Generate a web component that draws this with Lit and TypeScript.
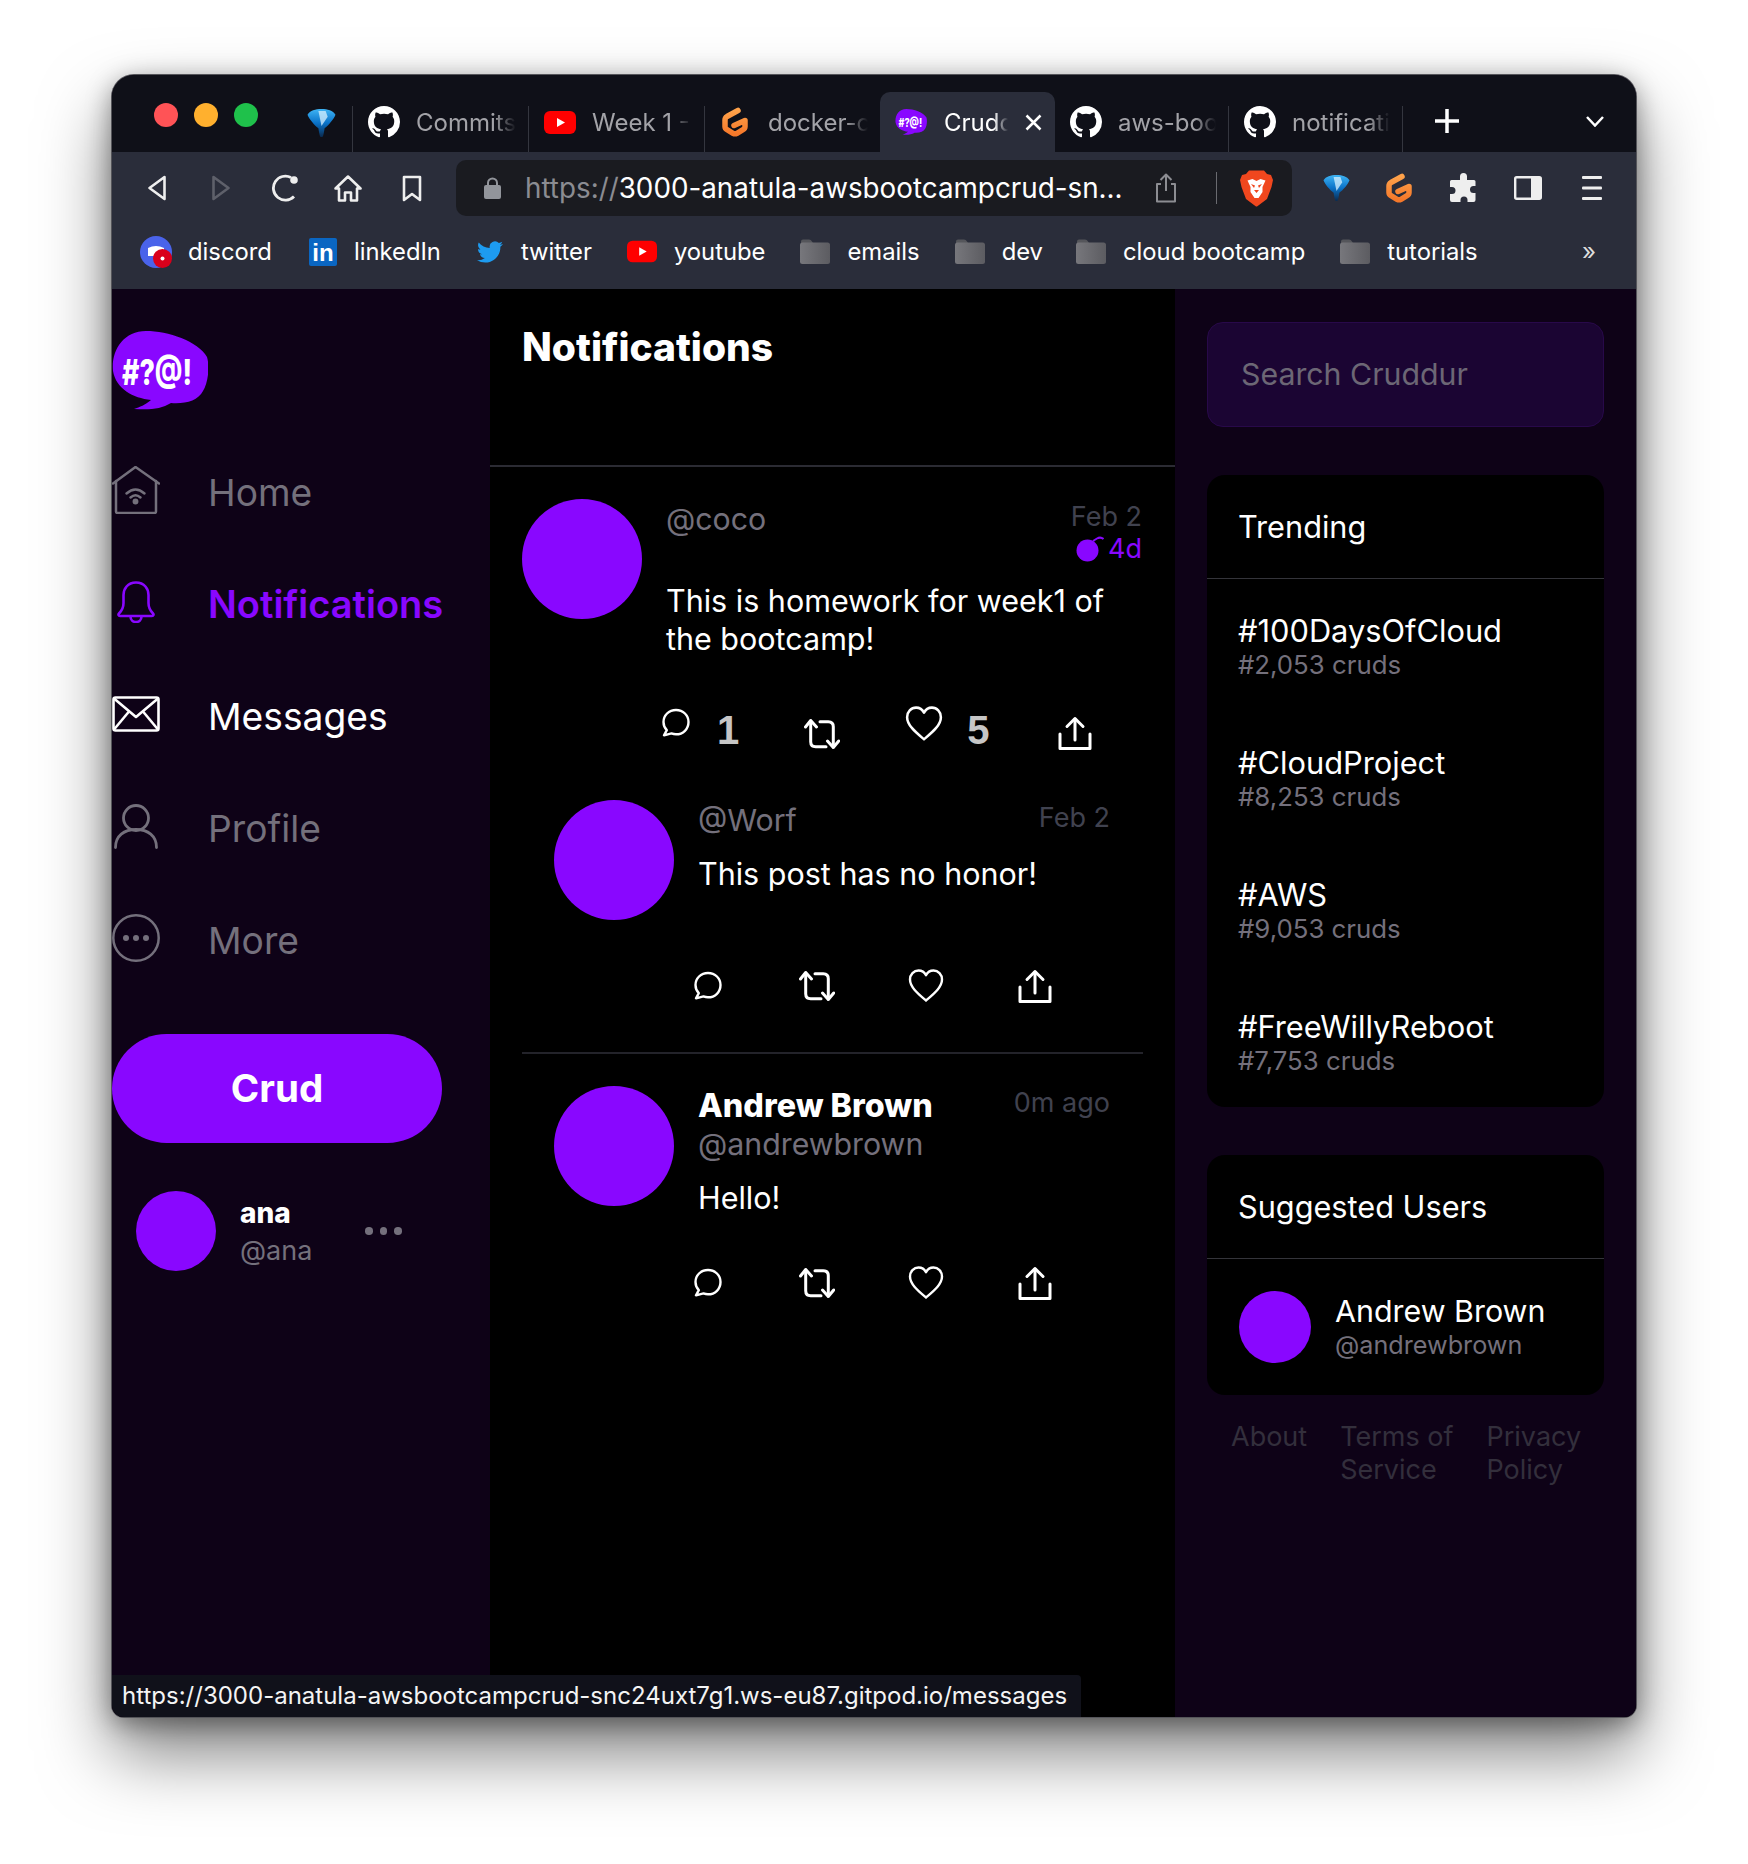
import { LitElement, css, html, svg } from "lit";
import { customElement } from "lit/decorators.js";

const GITHUB =
  "M8 0C3.58 0 0 3.58 0 8c0 3.54 2.29 6.53 5.47 7.59.4.07.55-.17.55-.38 0-.19-.01-.82-.01-1.49-2.01.37-2.53-.49-2.69-.94-.09-.23-.48-.94-.82-1.13-.28-.15-.68-.52-.01-.53.63-.01 1.08.58 1.23.82.72 1.21 1.87.87 2.33.66.07-.52.28-.87.51-1.07-1.78-.2-3.64-.89-3.64-3.95 0-.87.31-1.59.82-2.15-.08-.2-.36-1.02.08-2.12 0 0 .67-.21 2.2.82.64-.18 1.32-.27 2-.27.68 0 1.36.09 2 .27 1.53-1.04 2.2-.82 2.2-.82.44 1.1.16 1.92.08 2.12.51.56.82 1.27.82 2.15 0 3.07-1.87 3.75-3.65 3.95.29.25.54.73.54 1.48 0 1.07-.01 1.93-.01 2.2 0 .21.15.46.55.38A8.013 8.013 0 0016 8c0-4.42-3.58-8-8-8z";
const TWITTER =
  "M23.953 4.57a10 10 0 01-2.825.775 4.958 4.958 0 002.163-2.723c-.951.555-2.005.959-3.127 1.184a4.92 4.92 0 00-8.384 4.482C7.69 8.095 4.067 6.13 1.64 3.162a4.822 4.822 0 00-.666 2.475c0 1.71.87 3.213 2.188 4.096a4.904 4.904 0 01-2.228-.616v.06a4.923 4.923 0 003.946 4.827 4.996 4.996 0 01-2.212.085 4.936 4.936 0 004.604 3.417 9.867 9.867 0 01-6.102 2.105c-.39 0-.779-.023-1.17-.067a13.995 13.995 0 007.557 2.209c9.053 0 13.998-7.496 13.998-13.985 0-.21 0-.42-.015-.63A9.935 9.935 0 0024 4.59z";
const BUBBLE =
  "M34 0C56 0 86 10 95 26C98 36 96 52 91 60C86 70 73 73 59 72C49 78 39 79 22 78C28 76 33 74 39 69C21 67 4 58 1 40C-1 20 11 0 34 0Z";

const github = () => html`<svg width="32" height="32" viewBox="0 0 16 16"><path fill="#fff" d=${GITHUB}></path></svg>`;
const youtube = (w = 32, h = 23) => html`<svg width=${w} height=${h} viewBox="0 0 32 23">
  <rect width="32" height="23" rx="6" fill="#f00"></rect><path d="M13 7l8 4.500-8 4.500z" fill="#fff"></path>
</svg>`;
const gitpod = () => html`<svg class="gp" width="30" height="32" viewBox="0 0 30 32">
  <defs><linearGradient id="gpg" x1="0" y1="0" x2="0" y2="1">
    <stop offset="0" stop-color="#ffa24a"></stop><stop offset="1" stop-color="#f5782a"></stop>
  </linearGradient></defs>
  <path d="M18 4.500L7 10.500Q5 11.700 5 14V20.500Q5 22.500 7 23.700L13 27.300Q15 28.400 17 27.300L23 23.700Q25 22.500 25 20.500V14.500L14 19.500"
    fill="none" stroke="url(#gpg)" stroke-width="5.500" stroke-linecap="round" stroke-linejoin="round"></path>
</svg>`;
const gem = (w = 29, h = 30) => html`<svg width=${w} height=${h} viewBox="0 0 28 28">
  <defs><linearGradient id="gm" x1="0" y1="0" x2="0" y2="1">
    <stop offset="0" stop-color="#3eb4f4"></stop><stop offset=".5" stop-color="#0a72c8"></stop><stop offset="1" stop-color="#0a2a4e"></stop>
  </linearGradient></defs>
  <path d="M14 .5C20 .5 25 2 27.500 6C26 10 21 16 17 19C16.500 22 16 26 15 27.500H13C12 26 11.500 22 11 19C7 16 2 10 .5 6C3 2 8 .5 14 .5Z" fill="url(#gm)"></path>
  <path d="M11 2.500H18L20 8L14 17Z" fill="#d8f2ff" opacity=".75"></path>
</svg>`;
const folder = () => html`<svg width="30" height="25" viewBox="0 0 30 25">
  <defs><linearGradient id="fd" x1="0" y1="0" x2="1" y2="0">
    <stop offset="0" stop-color="#77777c"></stop><stop offset="1" stop-color="#5c5c61"></stop>
  </linearGradient></defs>
  <path d="M1 2.500Q1 .5 3 .5H9Q11 .5 12 2.500L13 4H1Z" fill="#55565b"></path><rect y="3.500" width="30" height="21.500" rx="2.500" fill="url(#fd)"></rect>
</svg>`;

const commentIcon = svg`<path d="M15 2C7.800 2 2.500 7.300 2.500 14C2.500 17.300 3.800 20.100 5.800 22.200L3 27.300L10.500 25.400C12 26 13.400 26.300 15 26.300C22.200 26.300 27.500 21 27.500 14C27.500 7.300 22.200 2 15 2Z" fill="none" stroke="currentColor" stroke-width="2.400" stroke-linejoin="round"></path>`;
const retweetIcon = svg`<g fill="none" stroke="currentColor" stroke-width="3" stroke-linecap="round" stroke-linejoin="round"><path d="M1.500 11L6.700 4.500L12.500 11"></path><path d="M6.700 5V25.700Q6.700 30.700 11.700 30.700H22"></path><path d="M23.500 25L29.300 31.500L34.700 25"></path><path d="M29.300 31V10.700Q29.300 5.700 24.300 5.700H16"></path></g>`;
const heartIcon = svg`<path d="M18 32.500C11 26.500 2 19.500 2 11.500C2 6.500 5.800 2.500 10.500 2.500C13.800 2.500 16.500 4.300 18 7.300C19.500 4.300 22.200 2.500 25.500 2.500C30.200 2.500 34 6.500 34 11.500C34 19.500 25 26.500 18 32.500Z" fill="none" stroke="currentColor" stroke-width="2.400" stroke-linejoin="round"></path>`;
const shareIcon = svg`<g fill="none" stroke="currentColor" stroke-width="3" stroke-linecap="round" stroke-linejoin="round"><path d="M17 24V3"></path><path d="M9 10.500L17 2.500L25 10.500"></path><path d="M2 18V32.500H32V18"></path></g>`;

const icon = (vb: string, w: number, h: number, body: unknown) =>
  html`<svg width=${w} height=${h} viewBox=${vb}>${body}</svg>`;

const NAV = [
  { label: "Home", cls: "", svg: html`<svg width="48" height="48" viewBox="0 0 48 48" fill="none" stroke="currentColor" stroke-width="2.500" stroke-linecap="round" stroke-linejoin="round"><path d="M1 17.500L23.500 1L47 17.500"></path><path d="M4 15V45.500Q4 47 5.500 47H42.500Q44 47 44 45.500V15"></path><path d="M14.500 27.500Q23.500 19.500 32.500 27.500"></path><path d="M18.500 31.500Q23.500 27 28.500 31.500"></path><circle cx="23.500" cy="35.500" r="1.700" fill="currentColor"></circle></svg>` },
  { label: "Notifications", cls: "active", svg: html`<svg width="38" height="42" viewBox="0 0 38 42" fill="none" stroke="currentColor" stroke-width="2.600" stroke-linecap="round" stroke-linejoin="round"><path d="M19 1.500C10.500 1.500 6.500 8 6.500 14V22C6.500 27 4.500 30 2 32.500C1 33.500 1.500 35 3 35H35C36.500 35 37 33.500 36 32.500C33.500 30 31.500 27 31.500 22V14C31.500 8 27.500 1.500 19 1.500Z"></path><path d="M13.500 35.500C13.500 39 16 41 19 41C22 41 24.500 39 24.500 35.500"></path></svg>` },
  { label: "Messages", cls: "on", svg: html`<svg width="48" height="36" viewBox="0 0 48 36" fill="none" stroke="currentColor" stroke-width="2.600" stroke-linejoin="round"><rect x="1.500" y="1.500" width="45" height="33" rx="2"></rect><path d="M2 2.500L24 21L46 2.500"></path><path d="M2 33.500L17 15.500"></path><path d="M46 33.500L31 15.500"></path></svg>` },
  { label: "Profile", cls: "", svg: html`<svg width="44" height="45" viewBox="0 0 44 45" fill="none" stroke="currentColor" stroke-width="2.800" stroke-linecap="round"><circle cx="22" cy="14" r="12.500"></circle><path d="M1.500 43.500C1.500 32 10 25.500 22 25.500C34 25.500 42.500 32 42.500 43.500"></path></svg>` },
  { label: "More", cls: "", svg: html`<svg width="48" height="48" viewBox="0 0 48 48"><circle cx="24" cy="24" r="22.700" fill="none" stroke="currentColor" stroke-width="2.500"></circle><circle cx="14" cy="24" r="3" fill="currentColor"></circle><circle cx="24" cy="24" r="3" fill="currentColor"></circle><circle cx="34" cy="24" r="3" fill="currentColor"></circle></svg>` },
];

const TRENDS = [
  ["#100DaysOfCloud", "#2,053 cruds"],
  ["#CloudProject", "#8,253 cruds"],
  ["#AWS", "#9,053 cruds"],
  ["#FreeWillyReboot", "#7,753 cruds"],
];

@customElement("app-root")
export class AppRoot extends LitElement {
  static styles = css`
    :host {
      display: block;
      height: 1864px;
      padding: 75px 112px 0;
      box-sizing: border-box;
      background: #fff;
      font-family: Inter, "Liberation Sans", sans-serif;
      overflow: hidden;
    }
    * {
      box-sizing: border-box;
    }
    svg {
      display: block;
      flex: none;
    }
    .window {
      position: relative;
      width: 1524px;
      height: 1642px;
      border-radius: 22px 22px 12px 12px;
      background: #0e0217;
      box-shadow: 0 0 0 1px #55555a, 0 36px 70px rgba(0, 0, 0, 0.5), 0 6px 26px rgba(0, 0, 0, 0.4);
      display: flex;
      flex-direction: column;
      overflow: hidden;
    }

    .tabs {
      height: 77px;
      flex: none;
      background: #0f1018;
      display: flex;
      align-items: flex-end;
      padding-left: 42px;
    }
    .lights {
      align-self: flex-start;
      margin-top: 28px;
      display: flex;
      gap: 16px;
    }
    .lights i {
      width: 24px;
      height: 24px;
      border-radius: 50%;
    }
    .tabs .gem {
      align-self: flex-start;
      margin: 33px 16px 0 49px;
    }
    .sep {
      width: 1px;
      height: 46px;
      background: #34363f;
      flex: none;
    }
    .tab {
      width: 175px;
      height: 60px;
      flex: none;
      display: flex;
      align-items: center;
      gap: 16px;
      padding: 0 12px 0 15px;
      color: #a3a3a8;
      font-size: 24px;
      white-space: nowrap;
    }
    .tab.short {
      width: 173px;
    }
    .gp {
      margin-right: 2px;
    }
    .tab .title {
      flex: 1;
      min-width: 0;
      overflow: hidden;
      -webkit-mask-image: linear-gradient(90deg, #000 78%, transparent);
      mask-image: linear-gradient(90deg, #000 78%, transparent);
    }
    .tab.active {
      background: #2a2d3a;
      border-radius: 10px 10px 0 0;
      color: #fff;
      gap: 17px;
      padding-right: 13px;
    }
    .plus {
      margin: 0 0 19px 32px;
      color: #fff;
    }
    .chev {
      margin: 0 0 25px 127px;
      color: #fff;
    }

    .toolbar {
      height: 72px;
      flex: none;
      background: #2a2d3a;
      display: flex;
      align-items: center;
      padding-left: 13px;
      color: #eee;
    }
    .tb {
      width: 64px;
      height: 40px;
      flex: none;
      display: flex;
      align-items: center;
      justify-content: center;
    }
    .tb.nudge {
      margin-left: -1px;
    }
    .address {
      width: 836px;
      height: 56px;
      margin: 0 12px 0 12px;
      background: #1a1b20;
      border-radius: 10px;
      display: flex;
      align-items: center;
      padding-left: 28px;
      color: #fff;
      font-size: 27.800px;
      flex: none;
    }
    .address .url {
      margin-left: 24px;
      width: 597px;
      white-space: nowrap;
      overflow: hidden;
    }
    .address .url span {
      color: #8b8c92;
    }
    .address .share {
      margin-left: 32px;
    }
    .address .div {
      width: 1px;
      height: 32px;
      background: #6a6b70;
      margin: 0 23px 0 38px;
    }

    .bookmarks {
      height: 65px;
      flex: none;
      background: #2a2d3a;
      display: flex;
      align-items: center;
      padding: 0 40px 10px 28px;
      gap: 35px;
      color: #fff;
      font-size: 23.800px;
    }
    .bm {
      display: flex;
      align-items: center;
      gap: 17px;
    }
    .bm.first {
      gap: 16px;
      margin-right: 2px;
    }
    .bm.pull {
      margin-left: -2px;
    }
    .li {
      width: 28px;
      height: 28px;
      background: #0a66c2;
      border-radius: 2px;
      color: #fff;
      font: 700 24px/30px "Liberation Sans", sans-serif;
      text-align: center;
    }
    .more-bm {
      margin-left: auto;
      font-size: 24px;
      color: #ddd;
    }

    .app {
      flex: 1;
      min-height: 0;
      display: flex;
      background: #000;
    }
    .side {
      width: 378px;
      flex: none;
      background: #0e0217;
      padding-top: 42px;
    }
    .logo {
      margin-bottom: 26px;
    }
    .nav {
      height: 112px;
      display: flex;
      align-items: center;
      font-size: 37.200px;
      color: #74707c;
    }
    .nav .ic {
      width: 48px;
      display: flex;
      justify-content: center;
      margin: 0 48px 4px 0;
    }
    .nav.on {
      color: #fff;
    }
    .nav.active {
      color: #8907ff;
      font-size: 38px;
      font-weight: 600;
    }
    .crud {
      width: 330px;
      height: 109px;
      margin-top: 38px;
      padding-bottom: 2px;
      border-radius: 55px;
      background: #8907ff;
      color: #fff;
      font-size: 38.500px;
      font-weight: 700;
      display: flex;
      align-items: center;
      justify-content: center;
    }
    .me {
      margin: 48px 0 0 24px;
      display: flex;
      align-items: center;
      gap: 24px;
    }
    .avatar {
      border-radius: 50%;
      background: #8907ff;
      flex: none;
    }
    .me .names {
      width: 101px;
    }
    .me b {
      display: block;
      color: #fff;
      font-size: 28px;
      line-height: 38px;
      font-weight: 800;
    }
    .me small {
      display: block;
      color: #74707c;
      font-size: 27px;
      line-height: 36px;
      margin-top: 1px;
    }
    .dots {
      display: flex;
      gap: 7px;
    }
    .dots i {
      width: 7.500px;
      height: 7.500px;
      border-radius: 50%;
      background: #74707c;
    }

    .main {
      width: 685px;
      flex: none;
      background: #000;
    }
    .head {
      height: 178px;
      border-bottom: 2px solid #2b2b33;
      padding: 34px 0 0 32px;
      color: #fff;
      font-size: 39px;
      font-weight: 800;
      line-height: 48px;
    }
    .post {
      display: flex;
      gap: 24px;
      padding: 32px 33px 0 32px;
    }
    .post.reply {
      padding: 0 65px 0 64px;
      margin-top: 32px;
    }
    .post.second {
      margin-top: 47px;
    }
    .body {
      flex: 1;
      min-width: 0;
    }
    .top {
      display: flex;
      justify-content: space-between;
    }
    .handle {
      color: #74707c;
      font-size: 30.300px;
      line-height: 40px;
    }
    .handle.tight {
      line-height: 38px;
    }
    .date {
      color: #40424f;
      font-size: 27px;
      line-height: 33px;
      text-align: right;
    }
    .date.drop {
      padding-top: 1px;
    }
    .date .first {
      margin-top: 2px;
      line-height: 31px;
    }
    .expires {
      color: #8907ff;
      display: flex;
      justify-content: flex-end;
      align-items: center;
      gap: 4px;
    }
    .text {
      color: #fff;
      font-size: 30.500px;
      line-height: 38px;
    }
    .text.long {
      margin-top: 17px;
    }
    .text.short {
      margin: 15px 0 75px;
    }
    .text.hello {
      margin: 16px 0 48px;
    }
    .actions {
      color: #fff;
      display: flex;
      margin-left: -5px;
      gap: 65px;
      margin-top: 50px;
      align-items: flex-start;
    }
    .act {
      display: flex;
      gap: 26px;
      align-items: flex-start;
    }
    .act.heart {
      gap: 24px;
      margin-top: -3px;
    }
    .act.heart .count {
      margin-top: 2px;
    }
    .count {
      font: 700 40px/46px "Liberation Sans", sans-serif;
      color: #c6c6c6;
      margin-top: -1px;
    }
    .low {
      margin-top: 8px;
    }
    .low.end {
      margin-left: 3px;
    }
    .row-acts {
      color: #fff;
      display: flex;
      gap: 73px;
      margin-left: -8px;
    }
    .row-acts .box {
      width: 36px;
      height: 36px;
      display: flex;
      align-items: center;
      justify-content: center;
    }
    .divider {
      height: 2px;
      background: #23232a;
      margin: 48px 32px 0;
    }
    .name {
      color: #fff;
      font-size: 32.300px;
      font-weight: 800;
      line-height: 38px;
      margin-top: 1px;
    }

    .right {
      flex: 1;
      background: #0e0217;
      padding: 33px 32px 0;
    }
    .search {
      height: 105px;
      border-radius: 16px;
      background: #1b0533;
      border: 1px solid #28094a;
      color: #6c6775;
      font-size: 30.300px;
      display: flex;
      align-items: center;
      padding: 0 0 2px 33px;
    }
    .card {
      background: #000;
      border-radius: 18px;
      margin-top: 48px;
      overflow: hidden;
    }
    .card h3 {
      margin: 0;
      height: 104px;
      border-bottom: 1px solid #34343a;
      color: #fff;
      font-size: 30.700px;
      font-weight: 400;
      display: flex;
      align-items: center;
      padding-left: 31px;
    }
    .trend {
      height: 132px;
      padding: 33px 31px 0;
    }
    .trend b {
      display: block;
      color: #fff;
      font-size: 30.800px;
      font-weight: 400;
      line-height: 38px;
    }
    .trend small {
      display: block;
      color: #74707c;
      font-size: 25.800px;
      line-height: 30px;
    }
    .user {
      display: flex;
      align-items: center;
      gap: 24px;
      padding: 32px 32px 32px;
    }
    .user b {
      display: block;
      color: #fff;
      font-size: 30.400px;
      font-weight: 400;
      line-height: 38px;
      margin-top: -2px;
    }
    .user small {
      display: block;
      color: #74707c;
      font-size: 25.200px;
      line-height: 30px;
    }
    .footer {
      display: flex;
      gap: 33px;
      padding: 25px 0 0 24px;
      color: #332f3c;
      font-size: 27px;
      line-height: 33px;
    }

    .status {
      position: absolute;
      left: 0;
      bottom: 0;
      width: 969px;
      height: 42px;
      background: #10111a;
      color: #f4f4f4;
      font-size: 24px;
      line-height: 41px;
      padding-left: 10px;
      white-space: nowrap;
      border-top-right-radius: 4px;
    }
  `;

  private renderTab(ic: unknown, title: string, cls = "") {
    return html`<div class="tab ${cls}">${ic}<span class="title">${title}</span></div>`;
  }

  private renderRowActions() {
    return html`<div class="row-acts">
      <div class="box">${icon("0 0 30 30", 30, 30, commentIcon)}</div>
      <div class="box">${icon("0 0 36 36", 36, 36, retweetIcon)}</div>
      <div class="box">${icon("0 0 36 36", 36, 36, heartIcon)}</div>
      <div class="box">${icon("0 0 34 34", 34, 34, shareIcon)}</div>
    </div>`;
  }

  render() {
    return html`
      <div class="window">
        <div class="tabs">
          <div class="lights">
            <i style="background:#ff5356"></i><i style="background:#ffb02e"></i><i style="background:#1fc14b"></i>
          </div>
          <div class="gem">${gem()}</div>
          <i class="sep"></i>${this.renderTab(github(), "Commits on main")}
          <i class="sep"></i>${this.renderTab(youtube(), "Week 1 - App")}
          <i class="sep"></i>${this.renderTab(gitpod(), "docker-compose")}
          <div class="tab active">
            <svg width="32" height="26" viewBox="0 0 96 79">
              <path fill="#8907ff" d=${BUBBLE}></path>
              <text x="10" y="54" font-family="Inter" font-weight="800" font-size="36" fill="#fff" textLength="72" lengthAdjust="spacingAndGlyphs">#?@!</text>
            </svg>
            <span class="title">Cruddur</span>
            <svg width="17" height="17" viewBox="0 0 17 17" stroke="#fff" stroke-width="2.500"><path d="M1.500 1.500L15.500 15.500M15.500 1.500L1.500 15.500"></path></svg>
          </div>
          ${this.renderTab(github(), "aws-bootcamp", "short")}
          <i class="sep"></i>${this.renderTab(github(), "notifications", "short")}
          <i class="sep"></i>
          <svg class="plus" width="24" height="24" viewBox="0 0 24 24" stroke="currentColor" stroke-width="3.500"><path d="M12 0V24M0 12H24"></path></svg>
          <svg class="chev" width="18" height="11" viewBox="0 0 18 11" fill="none" stroke="currentColor" stroke-width="2.500"><path d="M1 1L9 9.500L17 1"></path></svg>
        </div>

        <div class="toolbar">
          <div class="tb"><svg width="20" height="26" viewBox="0 0 20 26" fill="none" stroke="#eee" stroke-width="2.600" stroke-linejoin="round"><path d="M17.500 2L2.500 13L17.500 24Z"></path></svg></div>
          <div class="tb"><svg width="20" height="26" viewBox="0 0 20 26" fill="none" stroke="#5e606a" stroke-width="2.600" stroke-linejoin="round"><path d="M2.500 2L17.500 13L2.500 24Z"></path></svg></div>
          <div class="tb"><svg width="28" height="28" viewBox="0 0 28 28" fill="none" stroke="#eee" stroke-width="2.800"><path d="M23 22.500A12 12 0 1 1 20 3.500"></path><circle cx="23" cy="6" r="3.800" fill="#eee" stroke="none"></circle></svg></div>
          <div class="tb nudge"><svg width="28" height="27" viewBox="0 0 28 27" fill="none" stroke="#eee" stroke-width="2.600" stroke-linejoin="round"><path d="M1.500 13.500L14 1.500L26.500 13.500H23V25.500H17V17.500H11V25.500H5V13.500Z"></path></svg></div>
          <div class="tb"><svg width="20" height="27" viewBox="0 0 20 27" fill="none" stroke="#eee" stroke-width="2.600" stroke-linejoin="round"><path d="M2 2H18V25L10 19L2 25Z"></path></svg></div>
          <div class="address">
            <svg width="17" height="22" viewBox="0 0 17 22"><path d="M4 9V6a4.500 4.500 0 0 1 9 0v3" fill="none" stroke="#92959b" stroke-width="2"></path><rect y="8" width="17" height="14" rx="2" fill="#92959b"></rect></svg>
            <div class="url"><span>https://</span>3000-anatula-awsbootcampcrud-sn...</div>
            <svg class="share" width="24" height="30" viewBox="0 0 24 30" fill="none" stroke="#8c8d92" stroke-width="2" stroke-linejoin="round"><path d="M12 18V2M6.500 7L12 1.500L17.500 7"></path><path d="M7 11H3V28.500H21V11H17"></path></svg>
            <i class="div"></i>
            <svg width="33" height="37" viewBox="0 0 33 37">
              <path d="M9 .5H24L27 4L31 5L33 10L31.500 17L27 29L17 36.500H16L6 29L1.500 17L0 10L2 5L6 4Z" fill="#f0471e"></path>
              <path d="M7.500 10.500L12.500 9L16.500 11L20.500 9L25.500 10.500L22.500 17L22.500 22L18.500 28H14.500L10.500 22V17Z" fill="#fff"></path>
              <path d="M11 14L15 15.500L14 18ZM22 14L18 15.500L19 18ZM14 20H19L16.500 23Z" fill="#f0471e"></path>
            </svg>
          </div>
          <div class="tb">${gem(27, 28)}</div>
          <div class="tb">${gitpod()}</div>
          <div class="tb"><svg width="30" height="30" viewBox="0 0 30 30"><path fill="#eee" d="M11 3.500a3.500 3.500 0 0 1 7 0V7h7a1.500 1.500 0 0 1 1.500 1.500V13h-2a3.500 3.500 0 0 0 0 7h2v7a2 2 0 0 1-2 2h-6v-2a3.500 3.500 0 0 0-7 0v2H3a2 2 0 0 1-2-2v-6h2a3.500 3.500 0 0 0 0-7H1V8.500A1.500 1.500 0 0 1 2.500 7H11z"></path></svg></div>
          <div class="tb"><svg width="28" height="24" viewBox="0 0 28 24"><rect x="1.200" y="1.200" width="25.600" height="21.600" rx="1.500" fill="none" stroke="#eee" stroke-width="2.400"></rect><rect x="17" y="1" width="10" height="22" fill="#eee"></rect></svg></div>
          <div class="tb"><svg width="20" height="24" viewBox="0 0 20 24" fill="#eee"><rect width="20" height="3" rx="1"></rect><rect y="10.500" width="20" height="3" rx="1"></rect><rect y="21" width="20" height="3" rx="1"></rect></svg></div>
        </div>

        <div class="bookmarks">
          <div class="bm first">
            <svg width="32" height="32" viewBox="0 0 32 32"><circle cx="16" cy="16" r="16" fill="#4a63ea"></circle><path d="M8 12Q16 8 24 12V20H8Z" fill="#fff"></path><circle cx="22.500" cy="22.500" r="9.500" fill="#d9001b"></circle><circle cx="22.500" cy="22.500" r="2" fill="#fff"></circle></svg>
            <span>discord</span>
          </div>
          <div class="bm"><div class="li">in</div><span>linkedIn</span></div>
          <div class="bm">
            <svg width="28" height="26" viewBox="0 0 24 24"><path fill="#1d9bf0" d=${TWITTER}></path></svg>
            <span>twitter</span>
          </div>
          <div class="bm">${youtube(30, 23)}<span>youtube</span></div>
          <div class="bm">${folder()}<span>emails</span></div>
          <div class="bm">${folder()}<span>dev</span></div>
          <div class="bm pull">${folder()}<span>cloud bootcamp</span></div>
          <div class="bm">${folder()}<span>tutorials</span></div>
          <div class="more-bm">»</div>
        </div>

        <div class="app">
          <aside class="side">
            <svg class="logo" width="96" height="79" viewBox="0 0 96 79">
              <path fill="#8907ff" d=${BUBBLE}></path>
              <text x="10" y="54" font-family="Inter" font-weight="800" font-size="36" fill="#fff" textLength="70" lengthAdjust="spacingAndGlyphs">#?@!</text>
            </svg>
            ${NAV.map(
              (n) => html`<div class="nav ${n.cls}"><div class="ic">${n.svg}</div><span>${n.label}</span></div>`,
            )}
            <div class="crud">Crud</div>
            <div class="me">
              <div class="avatar" style="width:80px;height:80px"></div>
              <div class="names"><b>ana</b><small>@ana</small></div>
              <div class="dots"><i></i><i></i><i></i></div>
            </div>
          </aside>

          <main class="main">
            <div class="head">Notifications</div>
            <div class="post">
              <div class="avatar" style="width:120px;height:120px"></div>
              <div class="body">
                <div class="top">
                  <div class="handle">@coco</div>
                  <div class="date">
                    <div class="first">Feb 2</div>
                    <div class="expires">
                      <svg width="28" height="26" viewBox="0 0 28 26"><circle cx="11.500" cy="14.500" r="11" fill="#8907ff"></circle><path d="M17 5L21 2.500Q24.500 .5 27.500 3" fill="none" stroke="#8907ff" stroke-width="2"></path></svg>
                      <span>4d</span>
                    </div>
                  </div>
                </div>
                <div class="text long">This is homework for week1 of the bootcamp!</div>
                <div class="actions">
                  <div class="act">${icon("0 0 30 30", 30, 30, commentIcon)}<span class="count">1</span></div>
                  <div class="low">${icon("0 0 36 36", 36, 36, retweetIcon)}</div>
                  <div class="act heart">${icon("0 0 36 36", 38, 38, heartIcon)}<span class="count">5</span></div>
                  <div class="low end">${icon("0 0 34 34", 34, 34, shareIcon)}</div>
                </div>
              </div>
            </div>

            <div class="post reply second">
              <div class="avatar" style="width:120px;height:120px"></div>
              <div class="body">
                <div class="top">
                  <div class="handle">@Worf</div>
                  <div class="date drop">Feb 2</div>
                </div>
                <div class="text short">This post has no honor!</div>
                ${this.renderRowActions()}
              </div>
            </div>
            <div class="divider"></div>

            <div class="post reply">
              <div class="avatar" style="width:120px;height:120px"></div>
              <div class="body">
                <div class="top">
                  <div>
                    <div class="name">Andrew Brown</div>
                    <div class="handle tight">@andrewbrown</div>
                  </div>
                  <div class="date">0m ago</div>
                </div>
                <div class="text hello">Hello!</div>
                ${this.renderRowActions()}
              </div>
            </div>
          </main>

          <aside class="right">
            <div class="search">Search Cruddur</div>
            <div class="card">
              <h3>Trending</h3>
              ${TRENDS.map(([tag, n]) => html`<div class="trend"><b>${tag}</b><small>${n}</small></div>`)}
            </div>
            <div class="card">
              <h3>Suggested Users</h3>
              <div class="user">
                <div class="avatar" style="width:72px;height:72px"></div>
                <div><b>Andrew Brown</b><small>@andrewbrown</small></div>
              </div>
            </div>
            <div class="footer">
              <div>About</div>
              <div>Terms of<br />Service</div>
              <div>Privacy<br />Policy</div>
            </div>
          </aside>
        </div>

        <div class="status">https://3000-anatula-awsbootcampcrud-snc24uxt7g1.ws-eu87.gitpod.io/messages</div>
      </div>
    `;
  }
}
